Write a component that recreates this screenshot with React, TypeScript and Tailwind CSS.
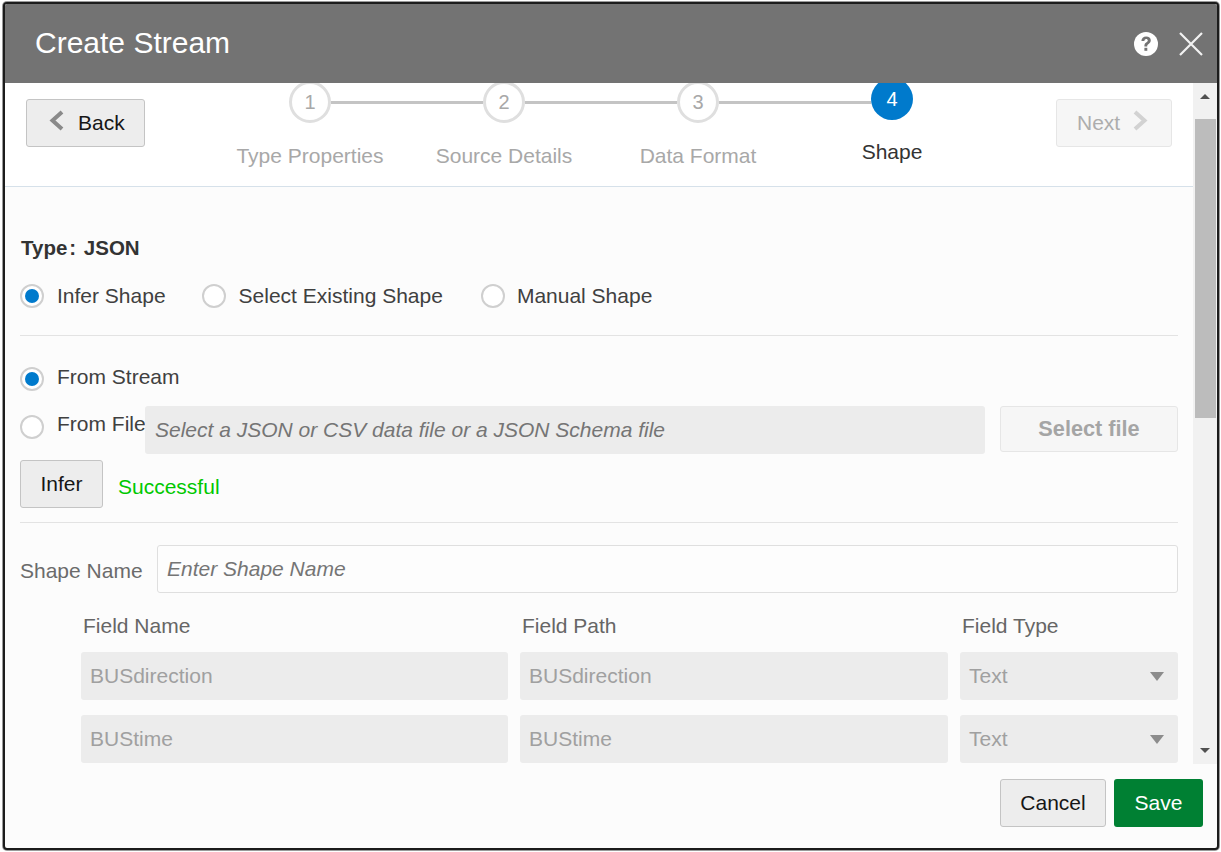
import React from 'react';

const steps = [
  { n: 1, label: 'Type Properties' },
  { n: 2, label: 'Source Details' },
  { n: 3, label: 'Data Format' },
  { n: 4, label: 'Shape', active: true },
];

const fields = ['BUSdirection', 'BUStime'];

const Radio: React.FC<{ checked?: boolean }> = ({ checked }) => (
  <span className="w-6 h-6 shrink-0 rounded-full bg-white border-2 border-[#cfcfcf] flex items-center justify-center">
    {checked && <span className="w-[14px] h-[14px] rounded-full bg-[#007acc]" />}
  </span>
);

const Chevron: React.FC<{ dir: 'left' | 'right'; className: string }> = ({ dir, className }) => (
  <svg width="17" height="21" viewBox="0 0 17 21" className={className}>
    <path
      d={dir === 'left' ? 'M14 2 L4.5 10.5 L14 19' : 'M3 2 L12.5 10.5 L3 19'}
      fill="none"
      stroke="currentColor"
      strokeWidth="4"
    />
  </svg>
);

const Stepper = () => (
  <div className="w-[776px] ml-[68px] shrink-0">
    <div className="flex pl-[76px] -mt-[2px]">
      {steps.map((s, i) => (
        <React.Fragment key={s.n}>
          {s.active ? (
            <div className="w-[42px] h-[42px] -mt-[3px] shrink-0 rounded-full bg-[#007acc] text-white text-[20px] flex items-center justify-center">
              {s.n}
            </div>
          ) : (
            <div className="w-[42px] h-[42px] shrink-0 rounded-full bg-white border-[3px] border-[#dfdfdf] text-[#a8a8a8] text-[20px] flex items-center justify-center">
              {s.n}
            </div>
          )}
          {i < steps.length - 1 && <div className="w-[152px] h-[3px] mt-[20px] bg-[#c4c4c4]" />}
        </React.Fragment>
      ))}
    </div>
    <div className="flex mt-[21px]">
      {steps.map((s) => (
        <div
          key={s.n}
          className={s.active ? 'w-[194px] text-center text-[21px] leading-[24px] -mt-[4px] text-[#333]' : 'w-[194px] text-center text-[21px] leading-[24px] text-[#a8a8a8]'}
        >
          {s.label}
        </div>
      ))}
    </div>
  </div>
);

const FieldRow: React.FC<{ name: string }> = ({ name }) => (
  <div className="flex gap-[12px] h-[48px] text-[21px] text-[#a0a0a0]">
    <div className="w-[427px] rounded-[3px] bg-[#ececec] flex items-center px-[9px]">{name}</div>
    <div className="w-[428px] rounded-[3px] bg-[#ececec] flex items-center px-[9px]">{name}</div>
    <div className="w-[218px] rounded-[3px] bg-[#ececec] flex items-center justify-between pl-[9px] pr-[14px]">
      <span>Text</span>
      <span className="w-0 h-0 border-x-[7px] border-x-transparent border-t-[9px] border-t-[#8c8c8c]" />
    </div>
  </div>
);

export default function App() {
  return (
    <div className="w-[1221px] h-[852px] bg-white pt-[2px] pl-[3px] pr-[2px] pb-[2px] font-['Liberation_Sans',Arial,sans-serif] overflow-hidden">
      <div className="h-[848px] rounded-[4px] border-2 border-[#1c1c1c] ring-1 ring-[#9a9a9a] overflow-hidden flex flex-col bg-[#fcfcfc]">
        <header className="h-[79px] shrink-0 bg-[#737373] flex items-center pl-[30px] pr-[14px]">
          <h1 className="text-[30px] text-white flex-1 -mt-[2px]">Create Stream</h1>
          <svg width="24" height="24" viewBox="0 0 24 24" className="mr-[21px]">
            <circle cx="12" cy="12" r="12" fill="#fff" />
            <path d="M7.4 9c0-2.8 2-4.6 4.8-4.6 2.7 0 4.6 1.6 4.6 3.9 0 1.8-1 2.8-2.2 3.6-1 .7-1.4 1.1-1.4 2.1v.4h-2.8v-.7c0-1.7.7-2.5 1.8-3.3 1-.7 1.6-1.1 1.6-2 0-.9-.7-1.5-1.6-1.5-1.1 0-1.8.8-1.8 2.1H7.4z" fill="#737373" />
            <rect x="10.4" y="15.8" width="2.9" height="3" fill="#737373" />
          </svg>
          <svg width="24" height="24" viewBox="0 0 24 24">
            <path d="M1 1 L23 23 M23 1 L1 23" stroke="#f2f2f2" strokeWidth="2.2" fill="none" />
          </svg>
        </header>

        <div className="flex flex-1 min-h-0">
          <main className="w-[1188px] h-[681px] overflow-hidden">
            <section className="h-[104px] bg-white border-b border-[#d6e1ea] flex overflow-hidden">
              <div className="pl-[21px] pt-[16px]">
                <button className="w-[119px] h-[48px] rounded-[3px] border border-[#c4c4c4] bg-[#ededed] text-[21px] text-[#161616] flex items-center pl-[21px] gap-[13px]">
                  <Chevron dir="left" className="text-[#8a8a8a] -mt-[5px]" />
                  Back
                </button>
              </div>
              <Stepper />
              <div className="pl-[67px] pt-[16px]">
                <button className="w-[116px] h-[48px] rounded-[3px] border border-[#e6e6e6] bg-[#f6f6f6] text-[21px] text-[#adadad] flex items-center pl-[20px] gap-[12px]">
                  Next
                  <Chevron dir="right" className="text-[#d2d2d2] -mt-[5px]" />
                </button>
              </div>
            </section>

            <section className="pl-[15px] w-[1173px] text-[21px] text-[#404040]">
              <div className="pt-[48px] text-[20.5px] leading-[26px] font-bold text-[#333] ml-[1px]">
                Type<span className="mx-[2px]">:</span> JSON
              </div>

              <div className="flex items-center mt-[22px] h-[26px]">
                <Radio checked />
                <span className="ml-[13px]">Infer Shape</span>
                <span className="ml-[36px]"><Radio /></span>
                <span className="ml-[13px]">Select Existing Shape</span>
                <span className="ml-[38px]"><Radio /></span>
                <span className="ml-[12px]">Manual Shape</span>
              </div>

              <div className="h-px bg-[#e3e3e3] mt-[26px]" />

              <div className="flex items-center mt-[29px] h-[26px]">
                <span className="mt-[2px]"><Radio checked /></span>
                <span className="ml-[13px] -mt-[2px]">From Stream</span>
              </div>

              <div className="flex mt-[15px]">
                <div className="w-[125px] flex items-center h-[48px]">
                  <span className="-mt-[6px]"><Radio /></span>
                  <span className="ml-[13px] -mt-[13px] whitespace-nowrap">From File</span>
                </div>
                <div className="w-[840px] h-[48px] rounded-[3px] bg-[#ececec] flex items-center px-[10px] italic text-[#757575]">
                  Select a JSON or CSV data file or a JSON Schema file
                </div>
                <button className="ml-[15px] w-[178px] h-[46px] rounded-[3px] border border-[#e6e6e6] bg-[#f6f6f6] text-[21.7px] font-bold text-[#a5a5a5]">
                  Select file
                </button>
              </div>

              <div className="flex items-center mt-[6px]">
                <button className="w-[83px] h-[48px] rounded-[3px] border border-[#c4c4c4] bg-[#ededed] text-[#161616] pb-[1px]">Infer</button>
                <span className="ml-[15px] mt-[5px] text-[#00c800]">Successful</span>
              </div>

              <div className="h-px bg-[#e3e3e3] mt-[14px]" />

              <div className="flex items-center mt-[22px] text-[#6b6b6b]">
                <span className="w-[137px] mt-[4px] shrink-0">Shape Name</span>
                <div className="flex-1 h-[48px] rounded-[3px] border border-[#dfdfdf] bg-[#fdfdfd] flex items-center px-[9px] italic text-[#757575]">
                  Enter Shape Name
                </div>
              </div>

              <div className="pl-[61px]">
                <div className="flex mt-[20px] h-[26px] leading-[26px] text-[#666]">
                  <span className="w-[439px] pl-[2px]">Field Name</span>
                  <span className="w-[440px] pl-[2px]">Field Path</span>
                  <span className="pl-[2px]">Field Type</span>
                </div>
                <div className="flex flex-col gap-[15px] mt-[13px]">
                  {fields.map((f) => (
                    <FieldRow key={f} name={f} />
                  ))}
                </div>
              </div>
            </section>
          </main>

          <aside className="w-[24px] h-[681px] bg-[#f1f1f1] flex flex-col items-center shrink-0">
            <div className="h-[36px] w-full flex items-center justify-center">
              <span className="w-0 h-0 border-x-[5px] border-x-transparent border-b-[5px] border-b-[#505050] -mt-[9px]" />
            </div>
            <div className="w-[21px] ml-[1px] h-[299px] bg-[#bcbcbc]" />
            <div className="flex-1" />
            <span className="w-0 h-0 border-x-[5px] border-x-transparent border-t-[5px] border-t-[#505050] mb-[11px]" />
          </aside>
        </div>

        <footer className="h-[84px] shrink-0 flex justify-end items-start pt-[15px] pr-[14px] gap-[8px] text-[21px]">
          <button className="w-[106px] h-[48px] rounded-[3px] border border-[#c4c4c4] bg-[#ededed] text-[#161616]">Cancel</button>
          <button className="w-[89px] h-[48px] rounded-[3px] bg-[#008033] text-white">Save</button>
        </footer>
      </div>
    </div>
  );
}
